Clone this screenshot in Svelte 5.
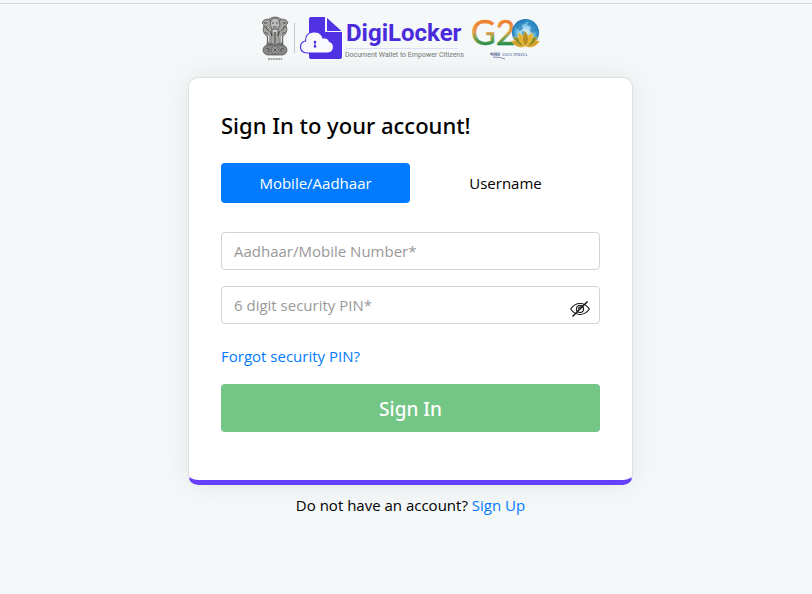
<script>
  let mode = $state('mobile');
  let hidden = $state(true);
  const petals = [
    [-72, '#d99a22'], [72, '#d99a22'], [-52, '#8d8a24'], [52, '#8d8a24'],
    [-28, '#e7b12e'], [28, '#e7b12e'], [0, '#b58d20']
  ];
</script>

<div class="page">
  <header>
    <svg class="logo" width="280" height="48" viewBox="261 15 280 48" role="img" aria-label="DigiLocker and G20 India">
      <defs>
        <linearGradient id="g20" gradientUnits="userSpaceOnUse" x1="0" y1="20" x2="0" y2="46">
          <stop offset="0" stop-color="#ef7c2c" />
          <stop offset=".45" stop-color="#e79b45" />
          <stop offset=".65" stop-color="#8da64b" />
          <stop offset="1" stop-color="#16884a" />
        </linearGradient>
        <radialGradient id="globe">
          <stop offset="0" stop-color="#e2f5fb" />
          <stop offset=".65" stop-color="#6fc0e6" />
          <stop offset="1" stop-color="#1472b4" />
        </radialGradient>
      </defs>

      <!-- lion capital -->
      <g stroke="#4a4a4a" stroke-width=".7" fill="#a3a3a0">
        <path d="M269 19q6-4 12 0l2 5-1 8 1 13h-16l1-13-1-8z" />
        <path d="M268 19q-5 0-6 4l2 2-1 5q1 5 4 6l1 8h3l1-15-1-8zM282 19q5 0 6 4l-2 2 1 5q-1 5-4 6l-1 8h-3l-1-15 1-8z" />
        <path d="M271 20q4-4 8 0l1 5-2 4h-6l-2-4z" fill="#bbb" />
        <path d="M270 31l2 4v9M280 31l-2 4v9M275 31v13M266 28l3 3M284 28l-3 3M265 32l3 2M285 32l-3 2" fill="none" stroke="#262626" />
        <path d="M272 23h2M276 23h2M273 27h4M264 23h3M283 23h3M264 27h3M283 27h3" fill="none" stroke="#222" />
        <path d="M273 30l1 2 1-2 1 2 1-2M272 36v7M278 36v7M268.500 36v6M281.500 36v6" fill="none" stroke="#eee" stroke-width=".8" />
        <rect x="263" y="45" width="24" height="10" rx="5" fill="#888" />
        <circle cx="275" cy="50" r="3.500" fill="#ccc" />
        <path d="M272 50h6M275 47v6M273 48l4 4M277 48l-4 4M266 48l3 1v3M284 48l-3 1v3" fill="none" stroke="#333" stroke-width=".6" />
        <path d="M268 59h14" stroke="#555" stroke-width="1.200" stroke-dasharray="2 .6" />
      </g>
      <path d="M294.500 23v30" stroke="#c3c8cb" />

      <!-- document with cloud -->
      <path d="M311 17h14v15h17v25q0 2-2 2h-29q-2 0-2-2V19q0-2 2-2z" fill="#5031e3" />
      <path d="M327 18l14.500 13H327z" fill="#5031e3" />
      <path d="M307 53q-6.500-.5-6.500-6 0-5 5-6 0-8 7.500-9 8-1 10 6 5-1 6.500 3.500 4 1 4 5.500 0 5.500-5.500 6z" fill="#f8faff" stroke="#5031e3" stroke-width="1.200" />
      <path d="M315 42v5" stroke="#5031e3" stroke-width="1.200" />
      <circle cx="315" cy="42" r="1.300" fill="#5031e3" /><circle cx="315" cy="46.500" r="1.300" fill="#5031e3" />
      <text class="brand" x="346" y="41">DigiLocker</text>
      <path d="M346 48.500h112" stroke="#dedcf7" />
      <text class="tagline" x="345" y="57">Document Wallet to Empower Citizens</text>

      <!-- G20 -->
      <text class="g" x="471" y="45" fill="url(#g20)" stroke="url(#g20)">G2</text>
      <circle cx="525.500" cy="32.500" r="13.500" fill="url(#globe)" />
      <path d="M516 23l6-3 5 1-2 3-3 1 1 4-3 2-4-3zM529 22l5 2 3 6-4 4-3-3 1-4-4-2zM522 31l4 1-1 5-3-2z" fill="#1d78b5" opacity=".65" />
      {#each petals as [angle, color]}
        <path d="M525.500 46q-6-6 0-15 6 9 0 15z" fill={color} stroke="#f1cc62" stroke-width=".5" transform={`rotate(${angle} 525.5 46)`} />
      {/each}
      <text class="india hindi" x="490" y="56">भारत</text>
      <text class="india" x="502" y="56">2023 INDIA</text>
      <path d="M493 57q8 0 12 2" fill="none" stroke="#59619a" stroke-width=".7" />
    </svg>
  </header>

  <main>
    <form class="card" onsubmit={(e) => e.preventDefault()}>
      <h1>Sign In to your account!</h1>
      <div class="tabs">
        <button type="button" class:active={mode === 'mobile'} onclick={() => (mode = 'mobile')}>Mobile/Aadhaar</button>
        <button type="button" class:active={mode === 'user'} onclick={() => (mode = 'user')}>Username</button>
      </div>
      <input type="text" aria-label="Aadhaar/Mobile Number" placeholder="Aadhaar/Mobile Number*" />
      <div class="pin">
        <input type={hidden ? 'password' : 'text'} aria-label="6 digit security PIN" placeholder="6 digit security PIN*" />
        <button type="button" class="eye" aria-label="Show or hide PIN" onclick={() => (hidden = !hidden)}>
          <svg width="20" height="18" viewBox="0 0 20 18" fill="none" stroke="#111" stroke-width="1.100">
            <path d="M.6 9Q4.500 3.500 10 3.500T19.400 9Q15.500 14.500 10 14.500T.6 9z" />
            <circle cx="10" cy="9" r="3.500" />
            <path d="M9 9.500q-1-2 1-2.500t2 1" />
            <path d="M17.500 1.500l-15 15" stroke-width="1.400" />
          </svg>
        </button>
      </div>
      <a class="forgot" href="#forgot">Forgot security PIN?</a>
      <button class="submit" type="submit">Sign In</button>
    </form>
    <p>Do not have an account? <a href="#signup">Sign Up</a></p>
  </main>
</div>

<style>
  :global(body) { margin: 0; background: #f4f8f9; }
  .page {
    border-top: 1px solid #d5d9da;
    margin-top: 3px;
    font: 15px/24px "Segoe UI", "Open Sans", "Noto Sans", sans-serif;
    color: #000;
  }
  header { display: flex; justify-content: center; padding: 11px 10px 14px 0; }
  .logo { display: block; overflow: visible; }
  .brand { font: bold 24px Roboto, "Liberation Sans", sans-serif; fill: #4a2bdc; }
  .tagline { font: 7px Roboto, "Liberation Sans", sans-serif; fill: #777; }
  .g { font: 34px Lato, sans-serif; stroke-width: .5px; }
  .india { font: 5px "Liberation Serif", serif; fill: #4c5590; }
  .hindi { font-weight: bold; }
  main { display: flex; flex-direction: column; align-items: center; padding-left: 9px; }
  .card {
    box-sizing: border-box;
    width: 100%;
    max-width: 445px;
    display: flex;
    flex-direction: column;
    padding: 32px 32px 48px;
    background: #fff;
    border: 1px solid #dedfe0;
    border-bottom: 5px solid #673ffb;
    border-radius: 10px;
    box-shadow: 0 0 30px rgba(0, 0, 0, .08);
  }
  h1 {
    margin: 0 0 23px;
    font: 500 22px/30px "Segoe UI", "Noto Sans", "Open Sans", sans-serif;
  }
  button { font: inherit; color: inherit; border: 0; background: none; padding: 0; cursor: pointer; }
  .tabs { display: flex; gap: 1px; margin-bottom: 29px; }
  .tabs button { flex: 1; height: 40px; border-radius: 4px; }
  .tabs .active { background: #007bff; color: #fff; }
  input {
    box-sizing: border-box;
    width: 100%;
    height: 38px;
    padding: 6px 12px;
    border: 1px solid #ced4da;
    border-radius: 4px;
    background: #fff;
    font: inherit;
  }
  input::placeholder { color: #999; opacity: 1; }
  .pin { position: relative; margin: 16px 0 20px; }
  .pin input { display: block; padding-right: 40px; }
  .eye { position: absolute; right: 10px; top: 14px; height: 18px; }
  .eye svg { display: block; }
  a { color: #007bff; text-decoration: none; }
  .forgot { align-self: flex-start; margin-bottom: 16px; }
  .submit {
    height: 48px;
    padding-top: 2px;
    border-radius: 4px;
    background: #74c686;
    color: #fff;
    font: 500 19px/24px "Segoe UI", "Noto Sans", "Open Sans", sans-serif;
  }
  p { margin: 8px 0 0; }
</style>
